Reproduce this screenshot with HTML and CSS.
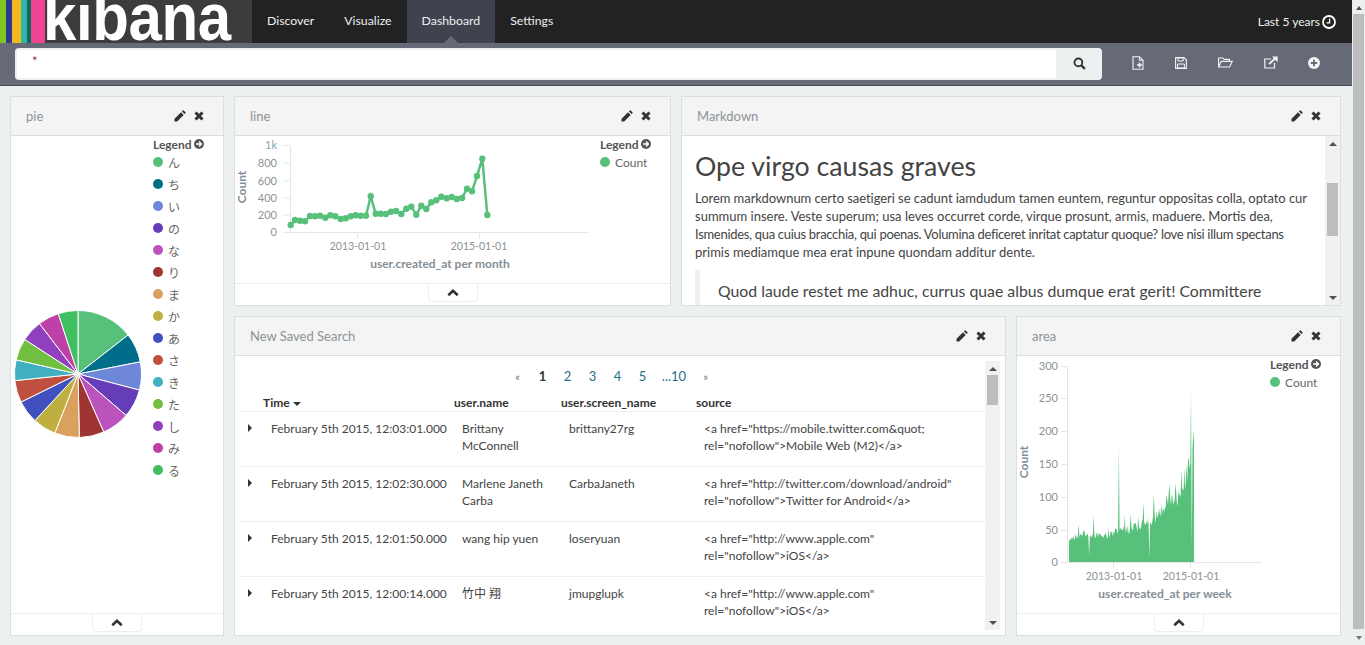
FILE: index.html
```html
<!DOCTYPE html>
<html lang="en">

<head>
    <meta charset="UTF-8">
    <meta name="viewport" content="width=device-width, initial-scale=1.0">
    <title>Dashboard - Kibana</title>
    <link rel="stylesheet" href="styles.css">
</head>

<body>
    <!-- Shared icons -->
    <svg class="icon-defs" width="0" height="0">
        <symbol id="i-pencil" viewBox="0 0 12 12">
            <path d="M0.5 8.8 L7 2.3 L9.7 5 L3.2 11.5 H0.5Z M7.9 1.4 L8.8 0.5 Q9.2 0.2 9.7 0.5 L11.5 2.3 Q11.8 2.8 11.5 3.2 L10.6 4.1Z" fill="currentColor" />
        </symbol>
        <symbol id="i-times" viewBox="0 0 10 10">
            <path d="M1.5 1.5 L8.5 8.5 M8.5 1.5 L1.5 8.5" stroke="currentColor" stroke-width="3" fill="none" />
        </symbol>
        <symbol id="i-search" viewBox="0 0 14 14">
            <circle cx="5.8" cy="5.8" r="4.2" stroke="currentColor" stroke-width="2" fill="none" />
            <path d="M9 9 L12.8 12.8" stroke="currentColor" stroke-width="2.4" fill="none" />
        </symbol>
        <symbol id="i-clock" viewBox="0 0 14 14">
            <circle cx="7" cy="7" r="6" stroke="currentColor" stroke-width="1.8" fill="none" />
            <path d="M7.6 3.5 V7.8 H4.5" stroke="currentColor" stroke-width="1.3" fill="none" />
        </symbol>
        <symbol id="i-legend" viewBox="0 0 10 10">
            <circle cx="5" cy="5" r="5" fill="currentColor" />
            <path d="M2 5 H7 M5 2.6 L7.4 5 L5 7.4" stroke="#fff" stroke-width="1.4" fill="none" />
        </symbol>
        <symbol id="i-chevron" viewBox="0 0 12 8">
            <path d="M1.3 6.3 L6 1.8 L10.7 6.3" stroke="currentColor" stroke-width="2.6" fill="none" />
        </symbol>
        <symbol id="i-new" viewBox="0 0 12 14">
            <path d="M7.5 0.7 H1 V13.3 H11 V4.2Z M7.5 0.7 V4.2 H11" stroke="currentColor" stroke-width="1.1" fill="none" />
            <path d="M7.5 6.5 V11.5 M5 9 H10" stroke="currentColor" stroke-width="1.6" fill="none" />
        </symbol>
        <symbol id="i-save" viewBox="0 0 12 12">
            <path d="M0.6 0.6 H9 L11.4 3 V11.4 H0.6Z" stroke="currentColor" stroke-width="1.1" fill="none" />
            <path d="M3 0.8 H8.2 V4 H3Z M2.6 7 H9.4 V11 H2.6Z" stroke="currentColor" stroke-width="1" fill="none" />
        </symbol>
        <symbol id="i-open" viewBox="0 0 15 11">
            <path d="M0.6 10 V1 H5 L6.2 2.4 H11.5 V4.4 M0.6 10 L3.2 4.4 H14.2 L11.5 10Z" stroke="currentColor" stroke-width="1.1" fill="none" />
        </symbol>
        <symbol id="i-share" viewBox="0 0 14 13">
            <path d="M10.5 7 V12 H0.8 V3 H7" stroke="currentColor" stroke-width="1.2" fill="none" />
            <path d="M5 8.2 L11 2.5" stroke="currentColor" stroke-width="1.8" fill="none" />
            <path d="M8 0.6 H13.6 V6.2Z" fill="currentColor" />
        </symbol>
        <symbol id="i-add" viewBox="0 0 12 12">
            <circle cx="6" cy="6" r="6" fill="currentColor" />
            <path d="M6 2.8 V9.2 M2.8 6 H9.2" stroke="#656a76" stroke-width="1.8" fill="none" />
        </symbol>
    </svg>

    <div class="window">
        <div class="app">
            <!-- Top navigation -->
            <nav class="navbar">
                <div class="logo">
                    <span class="stripe stripe-green"></span>
                    <span class="stripe stripe-navy"></span>
                    <span class="stripe stripe-yellow"></span>
                    <span class="stripe stripe-teal"></span>
                    <span class="stripe stripe-pine"></span>
                    <span class="stripe stripe-pink"></span>
                    <span class="logo-text">kibana</span>
                </div>
                <a class="nav-item">Discover</a>
                <a class="nav-item">Visualize</a>
                <a class="nav-item nav-active">Dashboard</a>
                <a class="nav-item">Settings</a>
                <div class="timepicker">
                    Last 5 years
                    <svg class="icon-clock"><use href="#i-clock" /></svg>
                </div>
            </nav>

            <!-- Search bar -->
            <div class="toolbar">
                <div class="search">
                    <div class="search-input">*</div>
                    <div class="search-button">
                        <svg class="icon-search"><use href="#i-search" /></svg>
                    </div>
                </div>
                <div class="tools">
                    <svg class="tool tool-new"><use href="#i-new" /></svg>
                    <svg class="tool tool-save"><use href="#i-save" /></svg>
                    <svg class="tool tool-open"><use href="#i-open" /></svg>
                    <svg class="tool tool-share"><use href="#i-share" /></svg>
                    <svg class="tool tool-add"><use href="#i-add" /></svg>
                </div>
            </div>

            <!-- Dashboard panels -->
            <main class="dashboard">
                <section class="panel panel-pie">
                    <header class="panel-head">
                        <span class="panel-title">pie</span>
                        <svg class="icon-edit"><use href="#i-pencil" /></svg>
                        <svg class="icon-close"><use href="#i-times" /></svg>
                    </header>
                    <div class="vis">
                        <div class="vis-chart">
                            <svg id="pieChart" width="142" height="477"></svg>
                        </div>
                        <div class="legend">
                            <div class="legend-head">Legend <svg class="icon-legend"><use href="#i-legend" /></svg></div>
                            <ul id="pieLegend" class="legend-list"></ul>
                        </div>
                    </div>
                    <div class="panel-foot">
                        <div class="foot-tab"><svg class="icon-chevron"><use href="#i-chevron" /></svg></div>
                    </div>
                </section>

                <section class="panel panel-line">
                    <header class="panel-head">
                        <span class="panel-title">line</span>
                        <svg class="icon-edit"><use href="#i-pencil" /></svg>
                        <svg class="icon-close"><use href="#i-times" /></svg>
                    </header>
                    <div class="vis">
                        <div class="vis-chart">
                            <svg id="lineChart" width="365" height="147">
                                <g class="axis">
                                    <path d="M48 9.5 H55.5 V96.5 H48 M55.5 27 H48 M55.5 45 H48 M55.5 62 H48 M55.5 79 H48 M55.5 96.5 H354 M122.5 96.5 V102 M244.5 96.5 V102" />
                                </g>
                                <g class="tick-labels">
                                    <text class="tick-top" x="42" y="13">1k</text>
                                    <text x="42" y="31">800</text>
                                    <text x="42" y="49">600</text>
                                    <text x="42" y="66">400</text>
                                    <text x="42" y="83">200</text>
                                    <text x="42" y="100">0</text>
                                </g>
                                <text class="tick-x" x="123" y="114">2013-01-01</text>
                                <text class="tick-x" x="244" y="114">2015-01-01</text>
                                <text class="axis-title" x="205" y="132">user.created_at per month</text>
                                <text class="axis-title" transform="translate(11 51) rotate(-90)">Count</text>
                                <g id="lineSeries"></g>
                            </svg>
                        </div>
                        <div class="legend">
                            <div class="legend-head">Legend <svg class="icon-legend"><use href="#i-legend" /></svg></div>
                            <ul class="legend-list">
                                <li><span class="dot dot-count"></span>Count</li>
                            </ul>
                        </div>
                    </div>
                    <div class="panel-foot">
                        <div class="foot-tab"><svg class="icon-chevron"><use href="#i-chevron" /></svg></div>
                    </div>
                </section>

                <section class="panel panel-markdown">
                    <header class="panel-head">
                        <span class="panel-title">Markdown</span>
                        <svg class="icon-edit"><use href="#i-pencil" /></svg>
                        <svg class="icon-close"><use href="#i-times" /></svg>
                    </header>
                    <div class="scroll-body">
                        <article class="markdown">
                            <h1>Ope virgo causas graves</h1>
                            <p><span class="line-snug">Lorem markdownum certo saetigeri se cadunt iamdudum tamen euntem, reguntur oppositas colla, optato cur</span><br>
                                summum insere. Veste superum; usa leves occurret corde, virque prosunt, armis, maduere. Mortis dea,<br>
                                <span class="line-tight">Ismenides, qua cuius bracchia, qui poenas. Volumina deficeret inritat captatur quoque? love nisi illum spectans</span><br>
                                primis mediamque mea erat inpune quondam additur dente.</p>
                            <blockquote>Quod laude restet me adhuc, currus quae albus dumque erat gerit! Committere</blockquote>
                        </article>
                        <div class="scrollbar">
                            <span class="arrow-up"></span>
                            <span class="thumb thumb-markdown"></span>
                            <span class="arrow-down"></span>
                        </div>
                    </div>
                </section>

                <section class="panel panel-search">
                    <header class="panel-head">
                        <span class="panel-title">New Saved Search</span>
                        <svg class="icon-edit"><use href="#i-pencil" /></svg>
                        <svg class="icon-close"><use href="#i-times" /></svg>
                    </header>
                    <div class="scroll-body search-body">
                        <div class="results">
                            <div class="pager">
                                <a class="page-end">&laquo;</a>
                                <a class="page-num page-current">1</a>
                                <a class="page-num">2</a>
                                <a class="page-num">3</a>
                                <a class="page-num">4</a>
                                <a class="page-num">5</a>
                                <a class="page-last">...10</a>
                                <a class="page-end">&raquo;</a>
                            </div>
                            <table class="doc-table">
                                <colgroup>
                                    <col class="col-toggle">
                                    <col class="col-time">
                                    <col class="col-name">
                                    <col class="col-screen">
                                    <col>
                                </colgroup>
                                <thead>
                                    <tr>
                                        <th></th>
                                        <th>Time <span class="sort-caret"></span></th>
                                        <th>user.name</th>
                                        <th>user.screen_name</th>
                                        <th>source</th>
                                    </tr>
                                </thead>
                                <tbody>
                                    <tr>
                                        <td><span class="row-caret"></span></td>
                                        <td class="cell-time">February 5th 2015, 12:03:01.000</td>
                                        <td>Brittany McConnell</td>
                                        <td>brittany27rg</td>
                                        <td>&lt;a href="https://mobile.twitter.com&amp;quot;<br>rel="nofollow"&gt;Mobile Web (M2)&lt;/a&gt;</td>
                                    </tr>
                                    <tr>
                                        <td><span class="row-caret"></span></td>
                                        <td class="cell-time">February 5th 2015, 12:02:30.000</td>
                                        <td>Marlene Janeth Carba</td>
                                        <td>CarbaJaneth</td>
                                        <td>&lt;a href="http://twitter.com/download/android"<br>rel="nofollow"&gt;Twitter for Android&lt;/a&gt;</td>
                                    </tr>
                                    <tr>
                                        <td><span class="row-caret"></span></td>
                                        <td class="cell-time">February 5th 2015, 12:01:50.000</td>
                                        <td>wang hip yuen</td>
                                        <td>loseryuan</td>
                                        <td>&lt;a href="http://www.apple.com"<br>rel="nofollow"&gt;iOS&lt;/a&gt;</td>
                                    </tr>
                                    <tr>
                                        <td><span class="row-caret"></span></td>
                                        <td class="cell-time">February 5th 2015, 12:00:14.000</td>
                                        <td>竹中 翔</td>
                                        <td>jmupglupk</td>
                                        <td>&lt;a href="http://www.apple.com"<br>rel="nofollow"&gt;iOS&lt;/a&gt;</td>
                                    </tr>
                                </tbody>
                            </table>
                        </div>
                        <div class="scrollbar">
                            <span class="arrow-up"></span>
                            <span class="thumb thumb-search"></span>
                            <span class="arrow-down"></span>
                        </div>
                    </div>
                </section>

                <section class="panel panel-area">
                    <header class="panel-head">
                        <span class="panel-title">area</span>
                        <svg class="icon-edit"><use href="#i-pencil" /></svg>
                        <svg class="icon-close"><use href="#i-times" /></svg>
                    </header>
                    <div class="vis">
                        <div class="vis-chart">
                            <svg id="areaChart" width="253" height="257">
                                <path id="areaSeries" class="area-fill" />
                                <g class="axis">
                                    <path d="M44 10.5 H50.5 V206.5 H44 M50.5 42.5 H44 M50.5 75.5 H44 M50.5 108.5 H44 M50.5 141.5 H44 M50.5 174.5 H44 M50.5 206.5 H245 M96.5 206.5 V212 M173.5 206.5 V212" />
                                </g>
                                <g class="tick-labels">
                                    <text x="41" y="14">300</text>
                                    <text x="41" y="46">250</text>
                                    <text x="41" y="79">200</text>
                                    <text x="41" y="112">150</text>
                                    <text x="41" y="145">100</text>
                                    <text x="41" y="178">50</text>
                                    <text x="41" y="210">0</text>
                                </g>
                                <text class="tick-x" x="97" y="224">2013-01-01</text>
                                <text class="tick-x" x="174" y="224">2015-01-01</text>
                                <text class="axis-title" x="148" y="242">user.created_at per week</text>
                                <text class="axis-title" transform="translate(11 106) rotate(-90)">Count</text>
                            </svg>
                        </div>
                        <div class="legend">
                            <div class="legend-head">Legend <svg class="icon-legend"><use href="#i-legend" /></svg></div>
                            <ul class="legend-list">
                                <li><span class="dot dot-count"></span>Count</li>
                            </ul>
                        </div>
                    </div>
                    <div class="panel-foot">
                        <div class="foot-tab"><svg class="icon-chevron"><use href="#i-chevron" /></svg></div>
                    </div>
                </section>
            </main>
        </div>

        <!-- Browser scrollbar -->
        <div class="scrollbar page-scrollbar">
            <span class="arrow-up"></span>
            <span class="thumb thumb-page"></span>
            <span class="arrow-down"></span>
        </div>
    </div>

    <script src="charts.js"></script>
</body>

</html>
```

FILE: styles.css
```css
body {
    margin: 0;
    height: 645px;
    overflow: hidden;
    font-family: Lato, 'Noto Sans CJK JP', sans-serif;
    font-size: 13px;
    background-color: #ecf0f1;
    color: #444;
}

.icon-defs {
    position: absolute;
}

.window {
    display: flex;
    height: 645px;
}

.app {
    flex: 1;
    min-width: 0;
}

/* Top navigation */
.navbar {
    display: flex;
    height: 43px;
    background-color: #222;
    color: #ecf0f1;
    font-size: 12.3px;
    line-height: 41px;
}

.logo {
    display: flex;
    width: 252px;
    height: 43px;
    overflow: hidden;
    background-color: #3c3c3c;
}

.stripe {
    height: 43px;
}

.stripe-green { width: 6px; background-color: #7fc61e; }
.stripe-navy { width: 6px; background-color: #2b3a8f; }
.stripe-yellow { width: 9px; background-color: #f5b81c; }
.stripe-teal { width: 6px; background-color: #33b5a5; }
.stripe-pine { width: 4px; background-color: #0b6b60; }
.stripe-pink { width: 14px; background-color: #ee4492; }

.logo-text {
    display: block;
    font-family: 'Liberation Sans', sans-serif;
    font-weight: bold;
    font-size: 60px;
    letter-spacing: -0.4px;
    line-height: 43px;
    color: #fff;
    transform: scaleY(1.12);
    transform-origin: left bottom;
    margin-top: -2px;
    margin-left: -2px;
}

.nav-item {
    position: relative;
    padding: 0 15px;
}

.nav-active {
    background-color: #40434d;
}

.nav-active::after {
    content: "";
    position: absolute;
    left: 50%;
    bottom: 0;
    margin-left: -7px;
    border: 7px solid transparent;
    border-top: 0;
    border-bottom-color: #656a76;
}

.timepicker {
    display: flex;
    align-items: center;
    gap: 2px;
    margin-left: auto;
    padding-right: 16px;
    font-size: 12px;
}

.icon-clock {
    width: 14px;
    height: 14px;
    color: #fff;
}

/* Search bar */
.toolbar {
    display: flex;
    align-items: center;
    height: 42px;
    padding: 0 0 0 15px;
    background-color: #656a76;
    border-bottom: 1px solid #4a4d57;
    box-sizing: content-box;
}

.search {
    display: flex;
    width: 1087px;
    height: 32px;
    margin-top: -1px;
    border-radius: 4px;
    overflow: hidden;
    background-color: #ecf0f1;
    box-sizing: border-box;
    padding: 2px 0 2px 2px;
}

.search-input {
    flex: 1;
    padding: 3px 15px;
    background-color: #fff;
    color: #7a3b3b;
}

.search-button {
    display: flex;
    align-items: center;
    justify-content: center;
    width: 46px;
}

.icon-search {
    width: 13px;
    height: 13px;
    color: #333;
}

.tools {
    position: relative;
    flex: 1;
    height: 42px;
    color: #f2f4f5;
}

.tool {
    position: absolute;
}

.tool-new { left: 30px; top: 13px; width: 12px; height: 14px; }
.tool-save { left: 73px; top: 14px; width: 12px; height: 12px; }
.tool-open { left: 116px; top: 14px; width: 15px; height: 11px; }
.tool-share { left: 162px; top: 13px; width: 14px; height: 13px; }
.tool-add { left: 206px; top: 14px; width: 12px; height: 12px; }

/* Dashboard grid */
.dashboard {
    display: grid;
    grid-template-columns: 214px 437px 325px 325px;
    grid-template-rows: 210px 320px;
    gap: 10px;
    padding: 10px 0 0 10px;
}

.panel {
    display: flex;
    flex-direction: column;
    min-width: 0;
    min-height: 0;
    overflow: hidden;
    background-color: #fff;
    border: 1px solid #dcdfe0;
    box-sizing: border-box;
}

.panel-pie { grid-column: 1; grid-row: 1 / 3; }
.panel-line { grid-column: 2; grid-row: 1; }
.panel-markdown { grid-column: 3 / 5; grid-row: 1; }
.panel-search { grid-column: 2 / 4; grid-row: 2; }
.panel-area { grid-column: 4; grid-row: 2; }

.panel-head {
    display: flex;
    align-items: center;
    flex: none;
    height: 38px;
    padding: 0 15px;
    background-color: #f4f4f4;
    border-bottom: 1px solid #dcdfe0;
}

.panel-title {
    flex: 1;
    font-size: 13px;
    color: #8c9397;
}

.icon-edit {
    width: 12px;
    height: 12px;
    color: #333;
    margin-right: 8px;
}

.icon-close {
    width: 10px;
    height: 10px;
    color: #333;
    margin-right: 4px;
}

/* Visualizations */
.vis {
    display: flex;
    flex: 1;
    min-height: 0;
}

.vis-chart {
    flex: 1;
    min-width: 0;
}

.vis-chart svg {
    display: block;
}

.legend {
    flex: none;
    width: 70px;
    padding-top: 1px;
    font-size: 12px;
    color: #666;
}

.legend-head {
    display: flex;
    align-items: center;
    gap: 2px;
    height: 14px;
    font-weight: bold;
    color: #555;
}

.icon-legend {
    width: 10px;
    height: 10px;
    color: #555;
}

.legend-list {
    margin: 0;
    padding: 0;
    list-style: none;
}

.legend-list li {
    display: flex;
    align-items: center;
    height: 22px;
}

.dot {
    flex: none;
    width: 10px;
    height: 10px;
    margin-right: 5px;
    border-radius: 50%;
}

.dot-count {
    background-color: #57c17b;
}

.panel-foot {
    flex: none;
    height: 22px;
    border-top: 1px solid #eee;
    box-sizing: border-box;
}

.foot-tab {
    display: flex;
    align-items: center;
    justify-content: center;
    width: 50px;
    height: 18px;
    margin: 0 auto;
    border: 1px solid #eee;
    border-top: 0;
    border-radius: 0 0 4px 4px;
    box-sizing: border-box;
    background-color: #fff;
}

.icon-chevron {
    width: 12px;
    height: 8px;
    color: #333;
}

.axis path {
    fill: none;
    stroke: #e4e6e7;
    stroke-width: 1;
}

.tick-labels text {
    font-size: 11px;
    fill: #8b9398;
    text-anchor: end;
}

.tick-labels .tick-top {
    fill: #7fa3b5;
}

.tick-x {
    font-size: 10.5px;
    fill: #8b9398;
    text-anchor: middle;
}

.axis-title {
    font-size: 12px;
    font-weight: bold;
    fill: #848e96;
    text-anchor: middle;
}

.series-line {
    fill: none;
    stroke: #57c17b;
    stroke-width: 2.5;
}

.series-dot {
    fill: #57c17b;
}

.area-fill {
    fill: #57c17b;
}

.pie-slice {
    stroke: #fff;
    stroke-width: 1;
}

/* Scrollable panels */
.scroll-body {
    display: flex;
    flex: 1;
    min-height: 0;
}

.scrollbar {
    display: flex;
    flex-direction: column;
    align-items: center;
    flex: none;
    width: 15px;
    background-color: #f1f1f1;
}

.thumb {
    flex: none;
    width: 11px;
    background-color: #bdbdbd;
}

.thumb-markdown { height: 53px; margin-top: 33px; }
.thumb-search { height: 30px; }
.thumb-page { height: 615px; }

.arrow-up,
.arrow-down {
    flex: none;
    width: 0;
    height: 0;
    margin: 6px 0 4px;
    border: 4px solid transparent;
    border-top: 0;
    border-bottom: 4px solid #505050;
}

.arrow-down {
    margin: auto 0 5px;
    border-bottom: 0;
    border-top: 4px solid #505050;
}

.page-scrollbar {
    width: 13px;
    background-color: #ecf0f1;
}

.page-scrollbar .arrow-up,
.page-scrollbar .arrow-down {
    border-left-width: 3px;
    border-right-width: 3px;
}

.page-scrollbar .arrow-down {
    border-top-color: #777;
}

/* Markdown panel */
.markdown {
    flex: 1;
    min-width: 0;
    padding: 0 5px 0 13px;
    overflow: hidden;
    line-height: 18px;
}

.markdown h1 {
    margin: 12px 0 5px;
    font-size: 26.7px;
    font-weight: normal;
    line-height: 36px;
}

.markdown p {
    margin: 0 0 9px;
    white-space: nowrap;
}

.line-snug {
    letter-spacing: -0.05px;
}

.line-tight {
    letter-spacing: -0.3px;
}

.markdown blockquote {
    margin: 0;
    padding: 9px 18px;
    border-left: 5px solid #ecf0f1;
    font-size: 15.8px;
    line-height: 23px;
}

/* Saved search table */
.search-body {
    padding: 5px;
}

.results {
    flex: 1;
    min-width: 0;
    overflow: hidden;
    background-color: #fff;
}

.pager {
    display: flex;
    justify-content: center;
    align-items: center;
    height: 30px;
    padding-right: 2px;
    color: #1f6f87;
}

.pager a {
    text-align: center;
}

.page-num { width: 25px; }
.page-last { width: 38px; }
.page-end { width: 25px; color: #777; font-size: 11px; }

.page-current {
    color: #333;
    font-weight: bold;
}

.doc-table {
    width: 745px;
    border-collapse: collapse;
    table-layout: fixed;
    font-size: 12px;
}

.col-toggle { width: 23px; }
.col-time { width: 191px; }
.col-name { width: 107px; }
.col-screen { width: 135px; }

.doc-table th {
    height: 20px;
    padding: 3px 0 0;
    border-bottom: 1px solid #ecf0f1;
    box-sizing: border-box;
    text-align: left;
    line-height: 15px;
    color: #333;
}

.doc-table td {
    height: 55px;
    padding: 8px 8px 0;
    border-bottom: 1px solid #ecf0f1;
    box-sizing: border-box;
    vertical-align: top;
    line-height: 17px;
}

.doc-table .cell-time {
    white-space: nowrap;
}

.sort-caret {
    display: inline-block;
    vertical-align: middle;
    border: 4.5px solid transparent;
    border-top: 4.5px solid #333;
    border-bottom: 0;
}

.row-caret {
    display: block;
    width: 0;
    margin-top: 4px;
    border: 4px solid transparent;
    border-left: 4px solid #333;
    border-right: 0;
}
```

FILE: charts.js
```js
var SVG_NS = 'http://www.w3.org/2000/svg';

function addSvg(parent, tag, attrs) {
    var el = document.createElementNS(SVG_NS, tag);
    for (var key in attrs) {
        el.setAttribute(key, attrs[key]);
    }
    parent.appendChild(el);
    return el;
}

// Pie: label, colour and the angle where the slice ends, clockwise from the top
var pieData = [
    ['ん', '#57c17b', 52.1],
    ['ち', '#006e8a', 79],
    ['い', '#6f87d8', 104.7],
    ['の', '#663db8', 130.7],
    ['な', '#bc52bc', 156.1],
    ['り', '#9e3533', 178.8],
    ['ま', '#daa05d', 201.4],
    ['か', '#bfaf40', 222.8],
    ['あ', '#4050bf', 243.8],
    ['さ', '#bf5040', 264],
    ['き', '#40afbf', 282.9],
    ['た', '#70bf40', 303],
    ['し', '#9040bf', 322.6],
    ['み', '#bf40a6', 341.9],
    ['る', '#40bf60', 360]
];

function drawPie() {
    var svg = document.getElementById('pieChart');
    var legend = document.getElementById('pieLegend');
    var cx = 67, cy = 238, r = 63.5;
    var start = 0;

    pieData.forEach(function (slice) {
        var a0 = start * Math.PI / 180;
        var a1 = slice[2] * Math.PI / 180;
        var d = 'M' + cx + ' ' + cy +
            'L' + (cx + r * Math.sin(a0)).toFixed(2) + ' ' + (cy - r * Math.cos(a0)).toFixed(2) +
            'A' + r + ' ' + r + ' 0 0 1 ' + (cx + r * Math.sin(a1)).toFixed(2) + ' ' + (cy - r * Math.cos(a1)).toFixed(2) + 'Z';
        addSvg(svg, 'path', { d: d, fill: slice[1], 'class': 'pie-slice' });
        start = slice[2];

        var li = document.createElement('li');
        var dot = document.createElement('span');
        dot.className = 'dot';
        dot.style.backgroundColor = slice[1];
        li.appendChild(dot);
        li.appendChild(document.createTextNode(slice[0]));
        legend.appendChild(li);
    });
}

// Line: points per month, in chart pixels
var linePoints = [
    [55.7, 89], [60, 84], [65, 84.7], [70, 85.3], [75, 80], [80, 80.3], [85, 79.7], [90.3, 81.7],
    [95.3, 79.3], [100.3, 80.3], [105.7, 83], [110.7, 82.3], [115.7, 80.3], [120.7, 79.3], [125.7, 79.7],
    [131, 79.7], [135.7, 60.3], [140.7, 77.7], [145.7, 77.7], [151, 78], [156, 75.7], [161, 75],
    [166.3, 78], [171.3, 72.7], [176.3, 70.7], [181.3, 78.7], [186.3, 69.7], [191.3, 73], [196.3, 66.3],
    [201.3, 64.3], [206.3, 60.7], [211.7, 62.3], [216.7, 61], [221.7, 63], [227, 62], [232, 52.7],
    [237, 55.3], [242, 40], [247.3, 22.7], [252.3, 79]
];

function drawLine() {
    var group = document.getElementById('lineSeries');
    var pts = linePoints.map(function (p) { return p.join(','); }).join(' ');
    addSvg(group, 'polyline', { points: pts, 'class': 'series-line' });
    linePoints.forEach(function (p) {
        addSvg(group, 'circle', { cx: p[0], cy: p[1], r: 3.2, 'class': 'series-dot' });
    });
}

// Area: weekly counts, a rough trend with noise and the visible spikes on top
var areaTrend = [[52, 32], [65, 44], [85, 40], [98, 46], [111, 50], [125, 56], [138, 70], [148, 90], [158, 95], [168, 115], [175, 190], [177, 195]];
var areaSpikes = { 28: 60, 50: 58, 70: 72, 90: 52, 104: 178, 112: 72, 120: 74, 130: 70, 137: 92, 151: 105, 158: 82, 172: 120, 180: 120, 188: 142, 192: 145, 195: 150, 201: 262, 202: 220, 204: 200 };
var areaDips = { 27: 10, 108: 5, 165: 20 };

function trendAt(x) {
    for (var i = 1; i < areaTrend.length; i++) {
        if (x <= areaTrend[i][0]) {
            var a = areaTrend[i - 1], b = areaTrend[i];
            return a[1] + (b[1] - a[1]) * (x - a[0]) / (b[0] - a[0]);
        }
    }
    return 190;
}

function drawArea() {
    var step = 125 / 168;
    var base = 206, scale = 196 / 300;
    var seed = 7;
    var d = 'M52 ' + base;

    for (var i = 0; i <= 168; i++) {
        seed = (seed * 137 + 11) % 251;
        var x = 52 + i * step;
        var v = trendAt(x) * (0.84 + 0.3 * seed / 251);
        var key = i + 37;
        if (areaSpikes[key]) v = areaSpikes[key];
        if (areaDips[i]) v = areaDips[i];
        d += 'L' + x.toFixed(2) + ' ' + (base - v * scale).toFixed(1);
    }

    d += 'L177 ' + base + 'Z';
    document.getElementById('areaSeries').setAttribute('d', d);
}

drawPie();
drawLine();
drawArea();
```
